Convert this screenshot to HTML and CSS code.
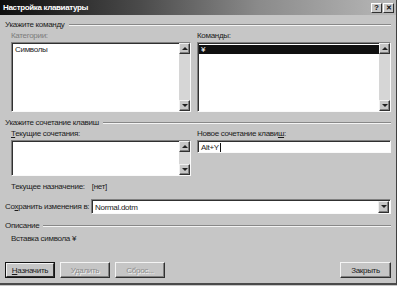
FILE: index.html
```html
<!DOCTYPE html>
<html lang="ru">
<head>
<meta charset="utf-8">
<link rel="stylesheet" href="styles.css">
</head>
<body>
<div class="dlg">
  <div class="titlebar">
    <span class="title">Настройка клавиатуры</span>
    <div class="tbtns">
      <span class="tb">?</span>
      <span class="tb tbx">✕</span>
    </div>
  </div>
  <div class="body">
    <div class="group-h"><span>Укажите команду</span></div>
    <div class="cols">
      <div class="col">
        <div class="lbl dis">Категории:</div>
        <div class="listbox lb-tall">
          <div class="items"><div class="item">Символы</div></div>
          <div class="vscroll"><span class="sb up"></span><span class="track"></span><span class="sb down"></span></div>
        </div>
      </div>
      <div class="col">
        <div class="lbl">Коман<u>д</u>ы:</div>
        <div class="listbox lb-tall">
          <div class="items"><div class="item sel">¥</div></div>
          <div class="vscroll"><span class="sb up"></span><span class="track"></span><span class="sb down"></span></div>
        </div>
      </div>
    </div>

    <div class="group-h g2"><span>Укажите сочетание клавиш</span></div>
    <div class="cols">
      <div class="col">
        <div class="lbl"><u>Т</u>екущие сочетания:</div>
        <div class="listbox lb-short">
          <div class="items"></div>
          <div class="vscroll"><span class="sb up"></span><span class="track"></span><span class="sb down"></span></div>
        </div>
      </div>
      <div class="col">
        <div class="lbl">Новое сочетание клави<u>ш</u>:</div>
        <div class="input"><span>Alt+Y</span><span class="caret"></span></div>
      </div>
    </div>
    <div class="assign"><span>Текущее назначение:</span><span class="none">[нет]</span></div>

    <div class="saverow">
      <span class="savelbl">Со<u>х</u>ранить изменения в:</span>
      <div class="combo"><span class="cval">Normal.dotm</span><span class="sb down cbtn"></span></div>
    </div>

    <div class="group-h g3"><span>Описание</span></div>
    <div class="desc">Вставка символа ¥</div>

    <div class="btnrow">
      <div class="btns-left">
        <span class="btn def"><span class="bi"><u>Н</u>азначить</span></span>
        <span class="btn disb"><span class="bi">Удалить</span></span>
        <span class="btn disb"><span class="bi">Сброс...</span></span>
      </div>
      <span class="btn close"><span class="bi">Закрыть</span></span>
    </div>
  </div>
</div>
</body>
</html>
```
FILE: styles.css
```css
html, body {
  margin: 0;
  padding: 0;
}
body {
  width: 397px;
  height: 286px;
  overflow: hidden;
  background: #c6c6c6;
  font-family: "Liberation Sans", Arial, sans-serif;
  font-size: 8px;
  letter-spacing: -0.3px;
  line-height: 11px;
  color: #1c1c1c;
}
.dlg {
  width: 397px;
  height: 285px;
  box-sizing: border-box;
  border-right: 1px solid #404040;
  border-bottom: 2px solid #4a4a4a;
  background: #c6c6c6;
}
.titlebar {
  height: 15px;
  background: linear-gradient(to right, #0e0e0e 0%, #4a4a4a 35%, #8a8a8a 65%, #b8b8b8 100%);
  display: flex;
  align-items: center;
  justify-content: space-between;
  padding: 0 2px 0 3px;
}
.title {
  color: #fff;
  font-weight: bold;
  font-size: 8px;
  letter-spacing: -0.35px;
}
.tbtns {
  display: flex;
  gap: 1px;
}
.tb {
  width: 11px;
  height: 10px;
  box-sizing: border-box;
  background: #c6c6c6;
  border: 1px solid;
  border-color: #fff #303030 #303030 #fff;
  font-size: 8px;
  line-height: 8px;
  letter-spacing: 0;
  font-weight: bold;
  text-align: center;
  color: #111;
}
.tbx {
  font-size: 7px;
}
.body {
  padding: 4px 5px 0 5px;
}
.group-h {
  display: flex;
  align-items: center;
  height: 11px;
}
.group-h::after {
  content: "";
  flex: 1;
  margin-left: 4px;
  height: 0;
  border-top: 1px solid #888;
  border-bottom: 1px solid #f4f4f4;
}
.g2 { margin-top: 5px; }
.g3 { margin-top: 6px; }
.cols {
  display: grid;
  grid-template-columns: 180px 194px;
  column-gap: 6px;
  padding-left: 6px;
}
.lbl {
  height: 11px;
}
.dis {
  color: #7c7c7c;
}
.listbox {
  margin-top: 1px;
  display: flex;
  box-sizing: border-box;
  background: #fff;
  border: 1px solid;
  border-color: #808080 #fafafa #fafafa #808080;
  box-shadow: inset 1px 1px 0 #303030;
  padding: 1px 0 0 1px;
}
.lb-tall { height: 70px; }
.lb-short { height: 36px; }
.items {
  flex: 1;
  padding-top: 1px;
}
.item {
  height: 9px;
  line-height: 9px;
  padding-left: 2px;
}
.sel {
  background: #101010;
  color: #fff;
}
.vscroll {
  width: 11px;
  display: flex;
  flex-direction: column;
  background: #d6d6d6;
  margin-top: -1px;
}
.track { flex: 1; }
.sb {
  position: relative;
  width: 11px;
  height: 11px;
  box-sizing: border-box;
  background: #c6c6c6;
  border: 1px solid;
  border-color: #f0f0f0 #303030 #303030 #f0f0f0;
  box-shadow: inset -1px -1px 0 #808080;
}
.sb::after {
  content: "";
  position: absolute;
  left: 2px;
  width: 0;
  height: 0;
  border-left: 3px solid transparent;
  border-right: 3px solid transparent;
}
.up::after {
  top: 3px;
  border-bottom: 3px solid #202020;
}
.down::after {
  top: 3px;
  border-top: 3px solid #202020;
}
.input {
  margin-top: 1px;
  height: 13px;
  box-sizing: border-box;
  background: #fff;
  border: 1px solid;
  border-color: #808080 #fafafa #fafafa #808080;
  box-shadow: inset 1px 1px 0 #303030;
  padding: 1px 0 0 3px;
  display: flex;
  align-items: center;
}
.caret {
  width: 1px;
  height: 9px;
  background: #111;
  margin-left: 1px;
}
.assign {
  margin-top: 5px;
  padding-left: 6px;
  height: 11px;
  display: flex;
  gap: 7px;
}
.saverow {
  margin-top: 7px;
  display: flex;
  align-items: center;
  gap: 4px;
}
.savelbl {
  width: 82px;
  white-space: nowrap;
}
.combo {
  flex: 1;
  height: 15px;
  box-sizing: border-box;
  background: #fff;
  border: 1px solid;
  border-color: #808080 #fafafa #fafafa #808080;
  box-shadow: inset 1px 1px 0 #303030;
  display: flex;
  align-items: center;
  padding: 1px 1px 0 3px;
}
.cval { flex: 1; }
.cbtn { height: 12px; }
.desc {
  margin-top: 2px;
  padding-left: 6px;
  height: 11px;
}
.btnrow {
  margin-top: 18px;
  display: flex;
  justify-content: space-between;
}
.btns-left {
  display: flex;
  gap: 5px;
}
.btn {
  width: 50px;
  height: 16px;
  box-sizing: border-box;
  display: flex;
  background: #c6c6c6;
  border: 1px solid;
  border-color: #f4f4f4 #303030 #303030 #f4f4f4;
}
.bi {
  flex: 1;
  display: flex;
  align-items: center;
  justify-content: center;
  box-shadow: inset -1px -1px 0 #808080;
}
.def {
  border: 1px solid #141414;
}
.def .bi {
  border: 1px solid;
  border-color: #f4f4f4 #303030 #303030 #f4f4f4;
  box-shadow: none;
}
.disb {
  color: #8c8c8c;
  text-shadow: 1px 1px 0 #f2f2f2;
}
.close {
  width: 51px;
}
```
